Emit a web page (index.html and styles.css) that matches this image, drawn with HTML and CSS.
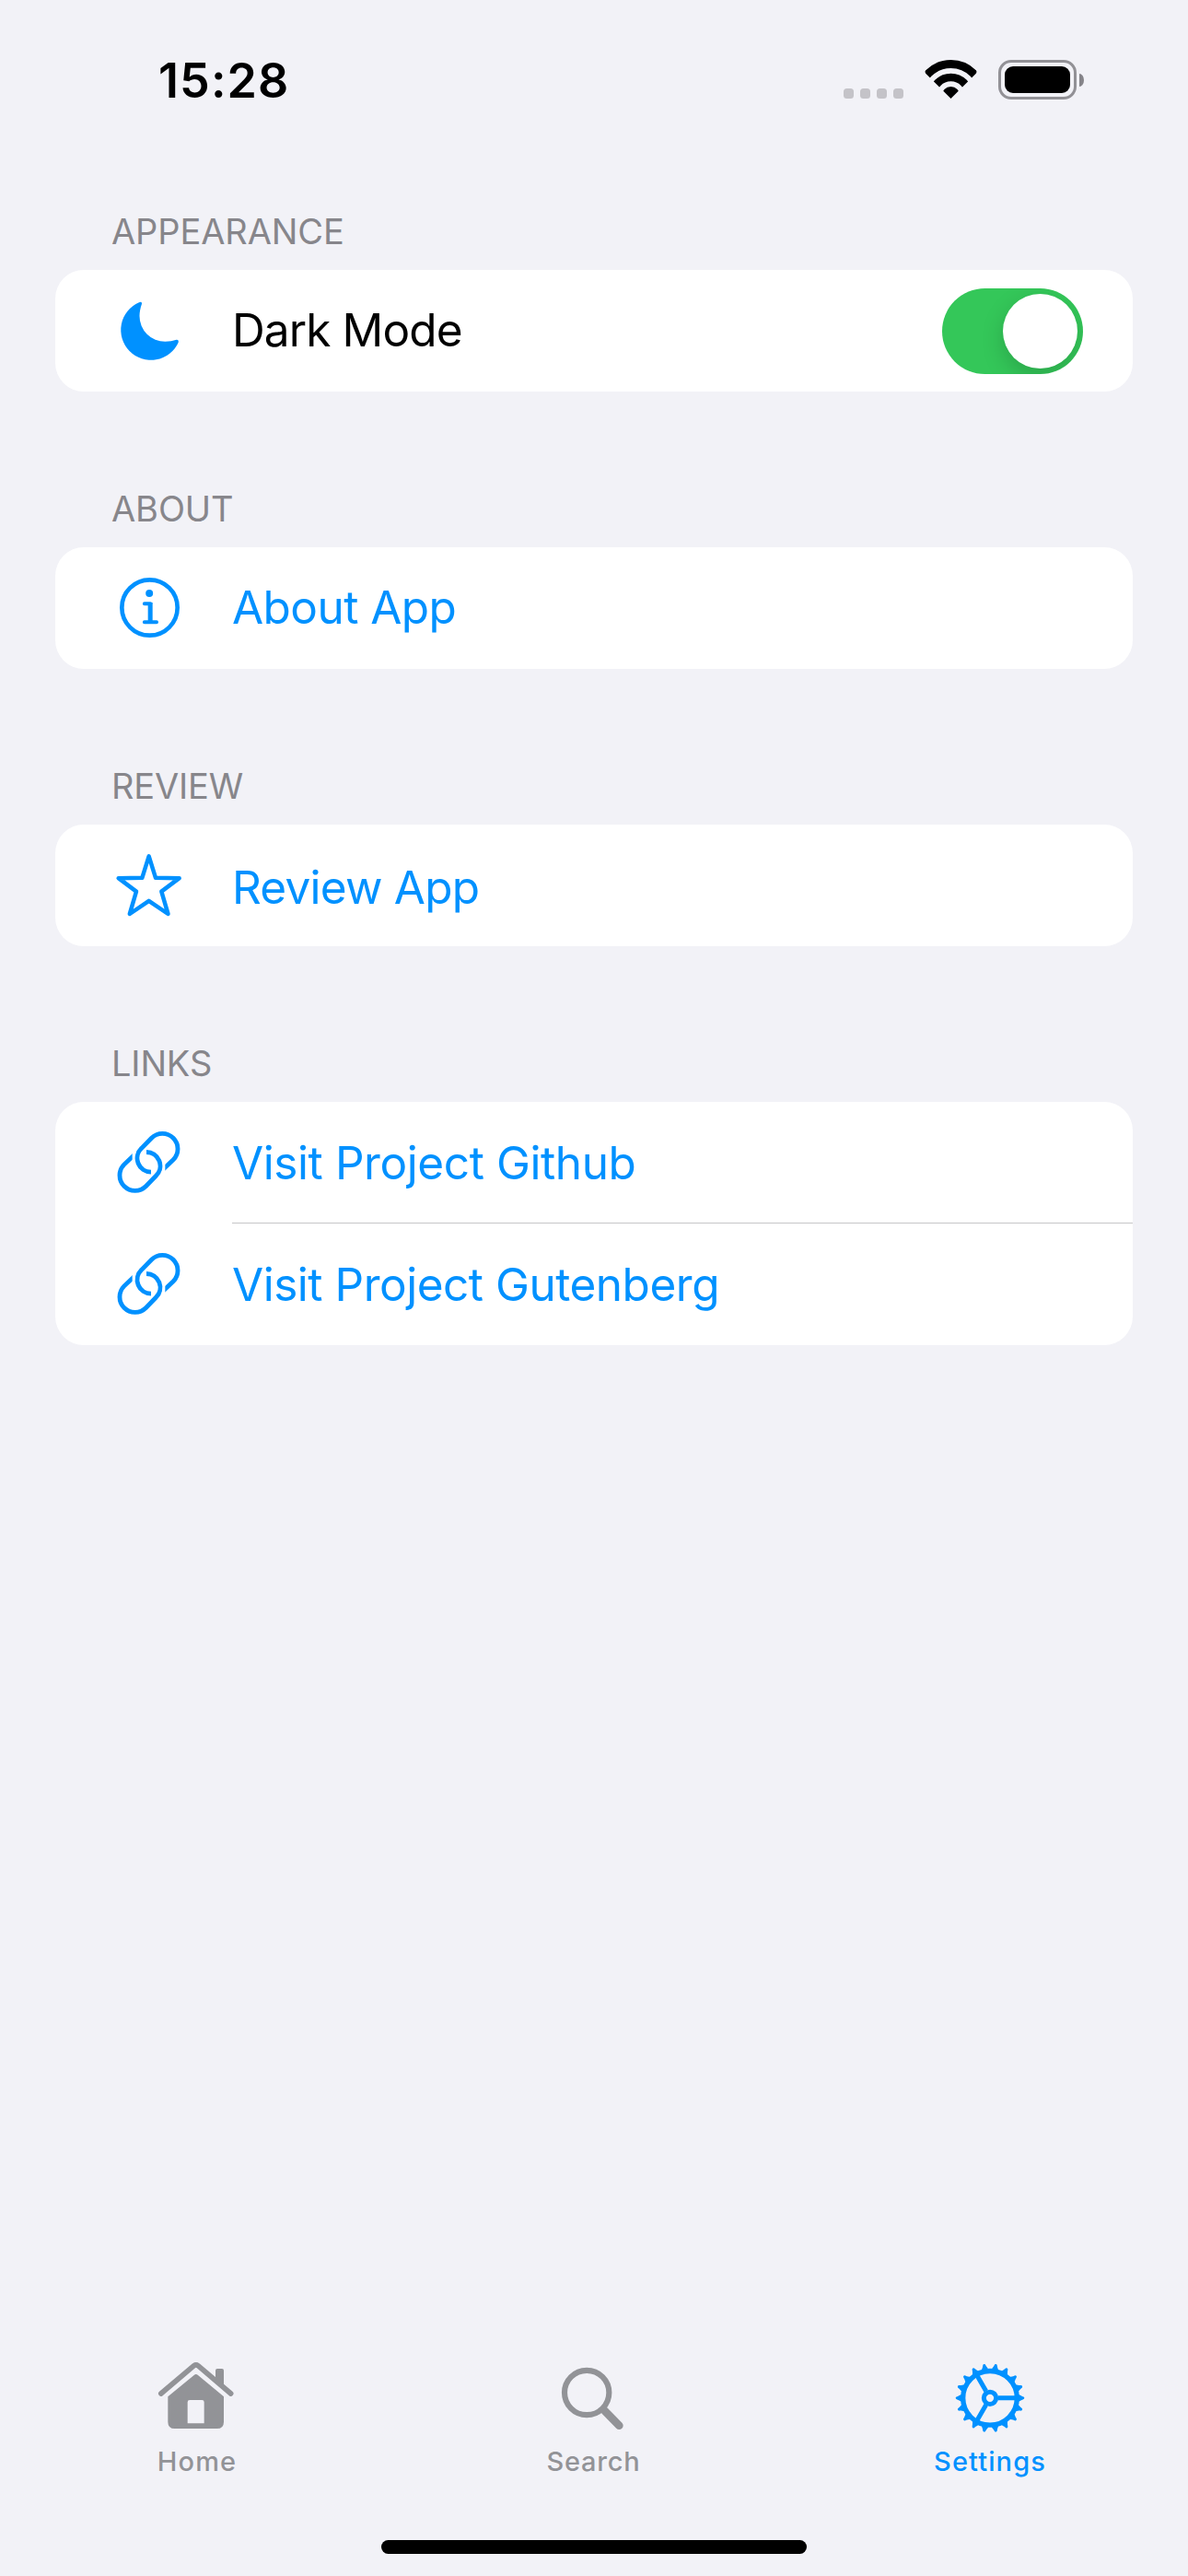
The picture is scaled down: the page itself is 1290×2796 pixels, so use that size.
FILE: index.html
```html
<!DOCTYPE html>
<html lang="en">
<head>
<meta charset="utf-8">
<title>Settings</title>
<link rel="stylesheet" href="styles.css">
</head>
<body>
<svg class="defs" aria-hidden="true">
  <defs>
    <clipPath id="link-cut"><path d="M200 300H460V540H388V415H352V540H200Z"/></clipPath>
    <g id="link-half">
      <path clip-path="url(#link-cut)" d="M376 453L414.4 416.4A50 50 0 0 0 343.6 345.6L311 379A45 45 0 0 0 342 456.500"/>
    </g>
    <symbol id="icon-link" viewBox="138 228 396 396">
      <g fill="none" stroke="currentColor" stroke-width="14.500">
        <use href="#link-half"/>
        <use href="#link-half" transform="rotate(180 334.5 424)"/>
      </g>
    </symbol>
    <path id="tooth" d="M92 -12C99 -9.500 102 -6 107 -5Q112 -4 112 0Q112 4 107 5C102 6 99 9.500 92 12Z"/>
    <g id="teeth">
      <use href="#tooth"/>
      <use href="#tooth" transform="rotate(20)"/>
      <use href="#tooth" transform="rotate(40)"/>
    </g>
  </defs>
</svg>

<header class="status">
  <time class="clock">15:28</time>
  <div class="indicators">
    <div class="signal"><span></span><span></span><span></span><span></span></div>
    <svg class="wifi" viewBox="339 75 177 126">
      <clipPath id="wedge"><path d="M427.500 201L347 121Q339 113 347 106V60H508V106Q516 113 508 121Z"/></clipPath>
      <g clip-path="url(#wedge)">
        <circle cx="427.500" cy="192" r="103.500" fill="none" stroke="#000" stroke-width="27"/>
        <circle cx="427.500" cy="192" r="60" fill="none" stroke="#000" stroke-width="26"/>
        <circle cx="427.500" cy="192" r="30"/>
      </g>
    </svg>
    <div class="battery">
      <div class="battery-shell"><div class="battery-level"></div></div>
      <div class="battery-cap"></div>
    </div>
  </div>
</header>

<main class="settings">
  <section class="group">
    <h2 class="group-title title-appearance">APPEARANCE</h2>
    <div class="card">
      <div class="row">
        <svg class="row-icon" viewBox="138 219 396 396"><path fill="currentColor" d="M303 324.500Q313 321 312 329C307 344 304.500 356 304.500 369A83.500 83.500 0 0 0 388 452.500C402 452.500 413 450 425 446.500Q433 446 431 455A98 98 0 1 1 303 324.500Z"/></svg>
        <span class="row-label label-dark">Dark Mode</span>
        <div class="switch" role="switch" aria-checked="true"><div class="knob"></div></div>
      </div>
    </div>
  </section>

  <section class="group">
    <h2 class="group-title title-about">ABOUT</h2>
    <div class="card">
      <a class="row link">
        <svg class="row-icon" viewBox="138 222 396 396">
          <circle cx="337.500" cy="418.500" r="90.500" fill="none" stroke="currentColor" stroke-width="14"/>
          <circle cx="336.500" cy="372" r="12" fill="currentColor"/>
          <g fill="none" stroke="currentColor" stroke-linecap="round" stroke-linejoin="round">
            <path stroke-width="12" d="M320.500 405.500H340M320.500 466H360"/>
            <path stroke-width="15" stroke-linecap="butt" d="M339.500 402V466"/>
          </g>
        </svg>
        <span class="row-label label-about">About App</span>
      </a>
    </div>
  </section>

  <section class="group">
    <h2 class="group-title title-review">REVIEW</h2>
    <div class="card">
      <a class="row link row-review">
        <svg class="row-icon" viewBox="138 225 396 396"><path fill="none" stroke="currentColor" stroke-width="13.500" stroke-linejoin="round" d="M335 328L357 398.500L434 399.500L376 443L397.500 516L335 473.500L272.500 516L294 443L236 399.500L313 398.500Z"/></svg>
        <span class="row-label label-review">Review App</span>
      </a>
    </div>
  </section>

  <section class="group">
    <h2 class="group-title title-links">LINKS</h2>
    <div class="card">
      <a class="row link row-url">
        <svg class="row-icon"><use href="#icon-link"/></svg>
        <span class="row-label label-url">Visit Project Github</span>
      </a>
      <a class="row link row-url">
        <svg class="row-icon"><use href="#icon-link"/></svg>
        <span class="row-label label-url-long">Visit Project Gutenberg</span>
      </a>
    </div>
  </section>
</main>

<nav class="tabs">
  <a class="tab">
    <svg class="tab-icon" viewBox="69 60 300 240">
      <path fill="none" stroke="currentColor" stroke-width="17" stroke-linecap="round" stroke-linejoin="round" d="M104.500 174L212 83Q218.500 78 225 83L332 174"/>
      <path fill="currentColor" d="M282 125V99Q282 93 288 93H303Q309 93 309 99V150Z"/>
      <path fill="currentColor" fill-rule="evenodd" d="M127 184L213 113Q218.500 108.500 224 113L309 184V266Q309 288 287 288H149Q127 288 127 266ZM191 271H245V202Q245 195 238 195H198Q191 195 191 202Z"/>
    </svg>
    <span class="tab-label label-home">Home</span>
  </a>
  <a class="tab">
    <svg class="tab-icon" viewBox="72 60 300 240">
      <circle cx="201.500" cy="171" r="72.500" fill="none" stroke="currentColor" stroke-width="18.500"/>
      <path fill="none" stroke="currentColor" stroke-width="26" stroke-linecap="round" d="M260 230L307 278"/>
    </svg>
    <span class="tab-label label-search">Search</span>
  </a>
  <a class="tab active">
    <svg class="tab-icon" viewBox="-150 -128.500 300 240">
      <g fill="none" stroke="currentColor">
        <circle r="88" stroke-width="16"/>
        <circle r="20" stroke-width="15"/>
        <path stroke-width="15" d="M26 0H84M-13 22.500L-42 72.700M-13 -22.500L-42 -72.700"/>
      </g>
      <g fill="currentColor">
        <use href="#teeth"/>
        <use href="#teeth" transform="rotate(60)"/>
        <use href="#teeth" transform="rotate(120)"/>
        <use href="#teeth" transform="rotate(180)"/>
        <use href="#teeth" transform="rotate(240)"/>
        <use href="#teeth" transform="rotate(300)"/>
      </g>
    </svg>
    <span class="tab-label label-settings">Settings</span>
  </a>
</nav>
<footer class="home-bar"><div class="home-indicator"></div></footer>
</body>
</html>
```
FILE: styles.css
```css
* {
  box-sizing: border-box;
}

body {
  margin: 0;
  width: 1290px;
  height: 2796px;
  display: flex;
  flex-direction: column;
  background: #f2f2f7;
  color: #000;
  font-family: Inter, "Liberation Sans", sans-serif;
  overflow: hidden;
}

.defs {
  display: block;
  width: 0;
  height: 0;
  flex: none;
}

/* Status bar */
.status {
  height: 223px;
  padding: 58px 113px 0 172px;
  display: flex;
  justify-content: space-between;
  align-items: flex-start;
}

.clock {
  font-size: 52px;
  line-height: 60px;
  font-weight: 600;
  letter-spacing: 1.1px;
}

.indicators {
  display: flex;
  align-items: flex-start;
  padding-top: 7px;
}

.signal {
  display: flex;
  gap: 7px;
  padding-top: 31px;
  margin-right: 22px;
}

.signal span {
  width: 11px;
  height: 11px;
  border-radius: 3.5px;
  background: #c4c3c8;
}

.wifi {
  display: block;
  width: 59px;
  height: 42px;
  margin-right: 22px;
}

.battery {
  display: flex;
  align-items: center;
  gap: 3px;
}

.battery-shell {
  width: 85px;
  height: 43px;
  padding: 4px;
  border: 3px solid #929196;
  border-radius: 14px;
}

.battery-level {
  height: 29px;
  border-radius: 9px;
  background: #000;
}

.battery-cap {
  width: 5px;
  height: 14px;
  border-radius: 0 5px 5px 0 / 0 7px 7px 0;
  background: #858489;
}

/* Grouped list */
.settings {
  flex: 1;
  padding: 0 60px;
}

.group {
  margin-bottom: 99px;
}

.group-title {
  margin: 0;
  padding: 0 60px 14px 61px;
  font-size: 38px;
  line-height: 56px;
  font-weight: 400;
  color: #87868b;
}

.title-appearance { letter-spacing: -0.1px; }
.title-about { letter-spacing: -0.1px; }
.title-review { letter-spacing: -0.15px; }
.title-links { letter-spacing: -0.15px; }

.card {
  background: #fff;
  border-radius: 31px;
  overflow: hidden;
}

.row {
  height: 132px;
  padding: 0 54px 0 36px;
  display: flex;
  align-items: center;
}

.link,
.row-icon {
  color: #0091ff;
}

.row-icon {
  display: block;
  flex: none;
  width: 132px;
  height: 132px;
}

.row-label {
  flex: 1;
  margin-left: 24px;
  padding-bottom: 2px;
  font-size: 49.5px;
  line-height: 64px;
  white-space: nowrap;
}

.row-review .row-label {
  padding: 4px 0 0;
}

.row-url .row-label {
  padding: 0;
}

.row-url:not(:last-child) {
  background: linear-gradient(#c6c6c8, #c6c6c8) 192px 131px / 100% 1px no-repeat;
}

.label-dark { letter-spacing: -0.88px; }
.label-about { letter-spacing: -0.56px; }
.label-review { letter-spacing: -0.78px; }
.label-url { letter-spacing: -0.41px; }
.label-url-long { letter-spacing: -0.48px; }

.switch {
  width: 153px;
  height: 93px;
  padding: 6px;
  display: flex;
  justify-content: flex-end;
  border-radius: 47px;
  background: #34c759;
  overflow: hidden;
}

.knob {
  width: 81px;
  height: 81px;
  border-radius: 50%;
  background: #fff;
  box-shadow: 0 9px 24px rgba(0, 0, 0, 0.17);
}

/* Tab bar */
.tabs {
  height: 197px;
  display: grid;
  grid-template-columns: 426px 435px 427px;
}

.tab {
  display: flex;
  flex-direction: column;
  align-items: center;
  color: #929397;
}

.tab.active {
  color: #0091ff;
}

.tab-icon {
  display: block;
  width: 100px;
  height: 80px;
  overflow: visible;
}

.tab-label {
  margin-top: 14px;
  padding-left: 2px;
  font-size: 29px;
  line-height: 36px;
  font-weight: 500;
}

.label-home { letter-spacing: 1.1px; }
.label-search { letter-spacing: 0.8px; }
.label-settings { letter-spacing: 1.1px; padding-left: 1px; }

.home-bar {
  height: 39px;
  display: flex;
  justify-content: center;
  align-items: flex-start;
}

.home-indicator {
  width: 462px;
  height: 15px;
  border-radius: 8px;
  background: #000;
}
```
